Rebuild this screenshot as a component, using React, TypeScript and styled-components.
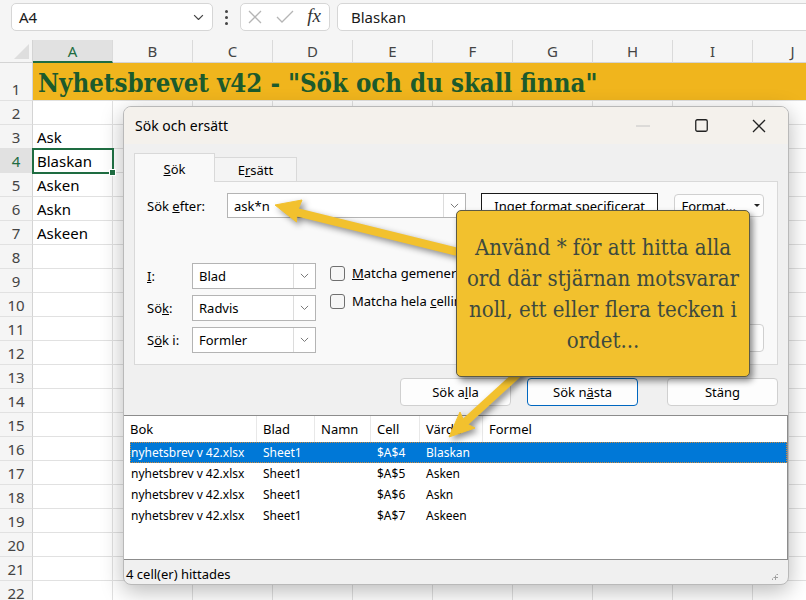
import React from 'react';
import styled, { createGlobalStyle, css } from 'styled-components';

const GlobalStyle = createGlobalStyle`
  html, body { margin: 0; padding: 0; }
  body {
    width: 806px;
    height: 600px;
    overflow: hidden;
    background: #ffffff;
    font-family: "Noto Sans", "Open Sans", sans-serif;
  }
`;

const Screen = styled.div`
  position: relative;
  width: 806px;
  height: 600px;
  overflow: hidden;
  background: #ffffff;
`;

/* ---------- formula bar ---------- */

const FormulaBar = styled.div`
  display: flex;
  align-items: center;
  height: 40px;
  padding: 0 0 6px 11px;
  box-sizing: border-box;
  background: #f5f5f5;
`;

const Box = styled.div`
  height: 28px;
  box-sizing: border-box;
  background: #ffffff;
  border: 1px solid #d6d6d6;
  border-radius: 5px;
  display: flex;
  align-items: center;
  font-size: 15px;
  color: #1a1a1a;
`;

const NameBox = styled(Box)`
  width: 202px;
  padding: 0 8px 0 7px;
  justify-content: space-between;
`;

const Dots = styled.div`
  width: 27px;
  display: flex;
  flex-direction: column;
  align-items: center;
  gap: 3px;
  span {
    width: 3px;
    height: 3px;
    border-radius: 50%;
    background: #444;
  }
`;

const FxBox = styled(Box)`
  width: 90px;
  margin-right: 7px;
  padding: 0 8px 0 6px;
  justify-content: space-between;
`;

const Fx = styled.span`
  font-family: "Liberation Serif", serif;
  font-style: italic;
  font-size: 19px;
  color: #333;
  margin-top: -2px;
`;

const FormulaInput = styled(Box)`
  flex: 1;
  margin-right: -10px;
  padding-left: 13px;
`;

/* ---------- sheet ---------- */

const Sheet = styled.div`
  display: grid;
  grid-template-columns: 33px repeat(10, 80px);
  grid-template-rows: 23px 38px;
  grid-auto-rows: 24px;
`;

const Corner = styled.div`
  position: relative;
  background: #f5f5f5;
  border-right: 1px solid #d4d4d4;
  border-bottom: 1px solid #d4d4d4;
  &::after {
    content: '';
    position: absolute;
    right: 3px;
    bottom: 3px;
    border-left: 15px solid transparent;
    border-bottom: 15px solid #dedede;
  }
`;

const ColHead = styled.div<{ $active?: boolean }>`
  display: flex;
  align-items: center;
  justify-content: center;
  box-sizing: border-box;
  font-size: 15px;
  color: ${p => (p.$active ? '#1e6c41' : '#444')};
  background: ${p => (p.$active ? '#e1e1e1' : '#f5f5f5')};
  border-right: 1px solid #dadada;
  border-bottom: ${p => (p.$active ? '2px solid #1e6c41' : '1px solid #d4d4d4')};
`;

const RowHead = styled.div<{ $active?: boolean }>`
  display: flex;
  align-items: flex-end;
  justify-content: center;
  box-sizing: border-box;
  padding-bottom: 1px;
  font-size: 15px;
  color: ${p => (p.$active ? '#1e6c41' : '#444')};
  background: ${p => (p.$active ? '#e1e1e1' : '#f5f5f5')};
  border-right: 1px solid #d4d4d4;
  border-bottom: 1px solid #e1e1e1;
`;

const Cell = styled.div<{ $active?: boolean }>`
  position: relative;
  display: flex;
  align-items: center;
  box-sizing: border-box;
  padding-left: 4px;
  font-size: 15px;
  color: #000;
  border-right: 1px solid #e1e1e1;
  border-bottom: 1px solid #e1e1e1;
  ${p =>
    p.$active &&
    css`
      z-index: 1;
      outline: 2px solid #1e6c41;
      outline-offset: -1px;
      &::after {
        content: '';
        position: absolute;
        right: -4px;
        bottom: -4px;
        width: 5px;
        height: 5px;
        background: #1e6c41;
        border: 1px solid #fff;
      }
    `}
`;

const Banner = styled.div`
  grid-column: 2 / -1;
  display: flex;
  align-items: center;
  padding: 2px 0 0 5px;
  background: #f0b51d;
  border-bottom: 1px solid #e1e1e1;
  font-family: "DejaVu Serif", serif;
  font-stretch: condensed;
  font-weight: bold;
  font-size: 25.6px;
  color: #1c5a2c;
  white-space: nowrap;
`;

/* ---------- dialog ---------- */

const Dialog = styled.div`
  position: absolute;
  left: 123px;
  top: 106px;
  width: 666px;
  height: 479px;
  box-sizing: border-box;
  display: flex;
  flex-direction: column;
  background: #f0f0f0;
  border: 1px solid #b9b9b9;
  border-radius: 8px;
  overflow: hidden;
  box-shadow: 0 6px 22px rgba(0, 0, 0, 0.28);
  font-family: "Noto Sans", sans-serif;
  font-size: 13px;
  color: #000;
`;

const TitleBar = styled.div`
  height: 37px;
  flex: none;
  display: flex;
  align-items: center;
  padding-left: 11px;
  background: #f4f1ec;
  font-size: 14px;
`;

const Controls = styled.div`
  margin-left: auto;
  display: flex;
  height: 100%;
`;

const Ctrl = styled.div`
  width: 58px;
  display: flex;
  align-items: center;
  justify-content: center;
`;

const Body = styled.div`
  padding: 9px 10px 0 10px;
  display: flex;
  flex-direction: column;
`;

const Tabs = styled.div`
  display: flex;
  align-items: flex-end;
  height: 29px;
`;

const Tab = styled.div<{ $active?: boolean }>`
  box-sizing: border-box;
  display: flex;
  align-items: center;
  justify-content: center;
  border: 1px solid #d9d9d9;
  border-bottom: none;
  ${p =>
    p.$active
      ? css`
          width: 81px;
          height: 29px;
          background: #f9f9f9;
          position: relative;
          z-index: 1;
          padding-top: 2px;
        `
      : css`
          width: 82px;
          height: 25px;
          background: #f4f4f4;
          border-left: none;
        `}
`;

const Panel = styled.div`
  margin-top: -1px;
  height: 184px;
  box-sizing: border-box;
  border: 1px solid #d9d9d9;
  background: #f9f9f9;
  padding: 11px 13px 0 12px;
  display: flex;
  flex-direction: column;
`;

const FindRow = styled.div`
  display: flex;
  align-items: center;
  height: 25px;
`;

const Label = styled.div<{ $w: number }>`
  width: ${p => p.$w}px;
  flex: none;
`;

const Combo = styled.div<{ $w: number; $h: number }>`
  width: ${p => p.$w}px;
  height: ${p => p.$h}px;
  box-sizing: border-box;
  display: flex;
  background: #fff;
  border: 1px solid #b4b4b4;
  span {
    flex: 1;
    display: flex;
    align-items: center;
    padding-left: 6px;
  }
`;

const ComboButton = styled.div`
  width: 21px;
  display: flex;
  align-items: center;
  justify-content: center;
  border-left: 1px solid #dcdcdc;
`;

const FormatBox = styled.div`
  width: 177px;
  height: 25px;
  margin-left: 15px;
  box-sizing: border-box;
  display: flex;
  align-items: center;
  justify-content: center;
  background: #fff;
  border: 1px solid #1a1a1a;
`;

const Button = styled.div<{ $w: number; $h?: number; $default?: boolean }>`
  width: ${p => p.$w}px;
  height: ${p => p.$h ?? 28}px;
  box-sizing: border-box;
  display: flex;
  align-items: center;
  justify-content: center;
  background: #fdfdfd;
  border: 1px solid ${p => (p.$default ? '#0067c0' : '#d0d0d0')};
  border-radius: 4px;
  flex: none;
`;

const FormatButton = styled(Button)`
  margin-left: 16px;
  justify-content: flex-end;
  padding-right: 3px;
  gap: 18px;
`;

const Caret = styled.span`
  width: 0;
  height: 0;
  border-left: 3px solid transparent;
  border-right: 3px solid transparent;
  border-top: 3px solid #222;
`;

const Options = styled.div`
  margin-top: 45px;
  display: flex;
  align-items: flex-start;
`;

const OptGrid = styled.div`
  display: grid;
  grid-template-columns: 45px 124px;
  grid-auto-rows: 26px;
  row-gap: 6px;
  align-items: center;
`;

const Checks = styled.div`
  margin-left: 14px;
  display: flex;
  flex-direction: column;
  gap: 10px;
  padding-top: 1px;
`;

const CheckRow = styled.div`
  display: flex;
  align-items: center;
  gap: 7px;
  white-space: nowrap;
`;

const CheckBox = styled.span`
  width: 15px;
  height: 15px;
  flex: none;
  box-sizing: border-box;
  border: 1px solid #6f6f6f;
  border-radius: 3px;
  background: #f6f6f6;
`;

const OptButton = styled(Button)`
  margin-left: auto;
  margin-top: 61px;
`;

const ButtonRow = styled.div`
  display: flex;
  justify-content: flex-end;
  margin-top: 13px;
  gap: 16px;
  & > :last-child {
    margin-left: 13px;
  }
`;

const ResultList = styled.div`
  margin-top: 9px;
  height: 145px;
  box-sizing: border-box;
  background: #fff;
  border-top: 1px solid #8c8c8c;
  border-right: 1px solid #8c8c8c;
  border-bottom: 1px solid #8c8c8c;
  font-size: 12px;
`;

const ListRow = styled.div<{ $head?: boolean; $sel?: boolean }>`
  display: grid;
  grid-template-columns: 133px 58px 56px 49px 63px 1fr;
  height: ${p => (p.$head ? 26 : 21)}px;
  align-items: center;
  ${p =>
    p.$head
      ? css`
          font-size: 13px;
          & > div {
            height: 100%;
            display: flex;
            align-items: center;
            border-right: 1px solid #e8e8e8;
          }
          & > div:last-child {
            border-right: none;
          }
        `
      : css`
          margin-left: 6px;
        `}
  ${p =>
    p.$sel &&
    css`
      background: #0078d7;
      color: #fff;
      outline: 1px dotted #d08a3a;
      outline-offset: -1px;
    `}
`;

const HeadCell = styled.div`
  padding-left: 6px;
`;

const DataCell = styled.div<{ $first?: boolean }>`
  padding-left: ${p => (p.$first ? 1 : 0)}px;
  white-space: nowrap;
`;

const StatusBar = styled.div`
  flex: 1;
  position: relative;
  display: flex;
  align-items: center;
  padding: 4px 0 0 2px;
  font-size: 13px;
`;

const Grip = styled.div`
  position: absolute;
  right: 10px;
  bottom: 4px;
  width: 7px;
  height: 7px;
  background: radial-gradient(circle, #a0a0a0 1px, transparent 1.2px) 0 0 / 3px 3px;
  clip-path: polygon(100% 0, 100% 100%, 0 100%);
`;

/* ---------- callout ---------- */

const Callout = styled.div`
  position: absolute;
  left: 456px;
  top: 210px;
  width: 294px;
  height: 167px;
  box-sizing: border-box;
  display: flex;
  align-items: center;
  justify-content: center;
  text-align: center;
  background: #f2c12e;
  border: 1px solid #5d5a45;
  border-radius: 5px;
  box-shadow: 3px 4px 6px rgba(0, 0, 0, 0.45);
  font-family: "DejaVu Serif", serif;
  font-stretch: condensed;
  font-size: 22px;
  line-height: 31px;
  color: #3e4a3e;
  white-space: nowrap;
`;

const ArrowLayer = styled.svg`
  position: absolute;
  left: 0;
  top: 0;
  width: 806px;
  height: 600px;
  pointer-events: none;
  filter: drop-shadow(3px 3px 3px rgba(0, 0, 0, 0.45));
`;

const Chevron = ({ w = 10, color = '#555' }: { w?: number; color?: string }) => (
  <svg width={w} height={w * 0.6} viewBox="0 0 10 6">
    <path d="M1 1 L5 5 L9 1" fill="none" stroke={color} strokeWidth="1.1" />
  </svg>
);

const sheetRows: Record<number, string> = {
  3: 'Ask',
  4: 'Blaskan',
  5: 'Asken',
  6: 'Askn',
  7: 'Askeen',
};

const cols = ['A', 'B', 'C', 'D', 'E', 'F', 'G', 'H', 'I', 'J'];

const results = [
  { cell: '$A$4', value: 'Blaskan' },
  { cell: '$A$5', value: 'Asken' },
  { cell: '$A$6', value: 'Askn' },
  { cell: '$A$7', value: 'Askeen' },
];

function App() {
  const rows = [];
  for (let r = 2; r <= 22; r++) rows.push(r);

  return (
    <Screen>
      <GlobalStyle />
      <FormulaBar>
        <NameBox>
          A4
          <Chevron w={11} color="#444" />
        </NameBox>
        <Dots>
          <span />
          <span />
          <span />
        </Dots>
        <FxBox>
          <svg width="16" height="16" viewBox="0 0 16 16">
            <path d="M2 2 L14 14 M14 2 L2 14" stroke="#b5b5b5" strokeWidth="1.3" />
          </svg>
          <svg width="18" height="14" viewBox="0 0 18 14">
            <path d="M1 7 L6 12 L17 1" fill="none" stroke="#b5b5b5" strokeWidth="1.3" />
          </svg>
          <Fx>fx</Fx>
        </FxBox>
        <FormulaInput>Blaskan</FormulaInput>
      </FormulaBar>

      <Sheet>
        <Corner />
        {cols.map(c => (
          <ColHead key={c} $active={c === 'A'}>
            {c}
          </ColHead>
        ))}
        <RowHead>1</RowHead>
        <Banner>Nyhetsbrevet v42 - "Sök och du skall finna"</Banner>
        {rows.map(r => (
          <React.Fragment key={r}>
            <RowHead $active={r === 4}>{r}</RowHead>
            {cols.map(c => (
              <Cell key={c} $active={r === 4 && c === 'A'}>
                {c === 'A' ? sheetRows[r] : null}
              </Cell>
            ))}
          </React.Fragment>
        ))}
      </Sheet>

      <Dialog>
        <TitleBar>
          Sök och ersätt
          <Controls>
            <Ctrl>
              <svg width="14" height="2" viewBox="0 0 14 2">
                <path d="M0 1 H14" stroke="#c4c4c4" strokeWidth="1" />
              </svg>
            </Ctrl>
            <Ctrl>
              <svg width="13" height="13" viewBox="0 0 13 13">
                <rect x="0.75" y="0.75" width="11.5" height="11.5" rx="1.5" fill="none" stroke="#222" strokeWidth="1.3" />
              </svg>
            </Ctrl>
            <Ctrl>
              <svg width="14" height="14" viewBox="0 0 14 14">
                <path d="M1 1 L13 13 M13 1 L1 13" stroke="#222" strokeWidth="1.3" />
              </svg>
            </Ctrl>
          </Controls>
        </TitleBar>

        <Body>
          <Tabs>
            <Tab $active>
              <span>
                <u>S</u>ök
              </span>
            </Tab>
            <Tab>
              <span>
                E<u>r</u>sätt
              </span>
            </Tab>
          </Tabs>
          <Panel>
            <FindRow>
              <Label $w={80}>
                Sök <u>e</u>fter:
              </Label>
              <Combo $w={240} $h={25}>
                <span>ask*n</span>
                <ComboButton>
                  <Chevron w={9} color="#777" />
                </ComboButton>
              </Combo>
              <FormatBox>Inget format specificerat</FormatBox>
              <FormatButton $w={90} $h={23}>
                Format...
                <Caret />
              </FormatButton>
            </FindRow>
            <Options>
              <OptGrid>
                <Label $w={45}>
                  <u>I</u>:
                </Label>
                <Combo $w={124} $h={26}>
                  <span>Blad</span>
                  <ComboButton>
                    <Chevron w={9} color="#777" />
                  </ComboButton>
                </Combo>
                <Label $w={45}>
                  Sö<u>k</u>:
                </Label>
                <Combo $w={124} $h={26}>
                  <span>Radvis</span>
                  <ComboButton>
                    <Chevron w={9} color="#777" />
                  </ComboButton>
                </Combo>
                <Label $w={45}>
                  S<u>ö</u>k i:
                </Label>
                <Combo $w={124} $h={26}>
                  <span>Formler</span>
                  <ComboButton>
                    <Chevron w={9} color="#777" />
                  </ComboButton>
                </Combo>
              </OptGrid>
              <Checks>
                <CheckRow>
                  <CheckBox />
                  <span>
                    <u>M</u>atcha gemener/versaler
                  </span>
                </CheckRow>
                <CheckRow>
                  <CheckBox />
                  <span>
                    Matcha hela <u>c</u>ellinnehållet
                  </span>
                </CheckRow>
              </Checks>
              <OptButton $w={124}>Alternativ &lt;&lt;</OptButton>
            </Options>
          </Panel>

          <ButtonRow>
            <Button $w={111}>
              <span>
                Sök a<u>l</u>la
              </span>
            </Button>
            <Button $w={111} $default>
              <span>
                Sök n<u>ä</u>sta
              </span>
            </Button>
            <Button $w={111}>Stäng</Button>
          </ButtonRow>
        </Body>

        <ResultList>
          <ListRow $head>
            <HeadCell>Bok</HeadCell>
            <HeadCell>Blad</HeadCell>
            <HeadCell>Namn</HeadCell>
            <HeadCell>Cell</HeadCell>
            <HeadCell>Värde</HeadCell>
            <HeadCell>Formel</HeadCell>
          </ListRow>
          {results.map((r, i) => (
            <ListRow key={r.cell} $sel={i === 0}>
              <DataCell $first>nyhetsbrev v 42.xlsx</DataCell>
              <DataCell>Sheet1</DataCell>
              <DataCell />
              <DataCell>{r.cell}</DataCell>
              <DataCell>{r.value}</DataCell>
              <DataCell />
            </ListRow>
          ))}
        </ResultList>

        <StatusBar>
          4 cell(er) hittades
          <Grip />
        </StatusBar>
      </Dialog>

      <ArrowLayer viewBox="0 0 806 600">
        <g fill="#f2c12e" stroke="#f2c12e">
          <line x1="466" y1="254" x2="296" y2="212" strokeWidth="8" />
          <polygon points="275,205 302,200 297,212 296.5,222" strokeWidth="1" strokeLinejoin="round" />
          <line x1="522" y1="370" x2="462" y2="425" strokeWidth="8" />
          <polygon points="449,437 460,412 465,423 475,428" strokeWidth="1" strokeLinejoin="round" />
        </g>
      </ArrowLayer>

      <Callout>
        <div>
          Använd * för att hitta alla
          <br />
          ord där stjärnan motsvarar
          <br />
          noll, ett eller flera tecken i
          <br />
          ordet...
        </div>
      </Callout>
    </Screen>
  );
}

export default App;
